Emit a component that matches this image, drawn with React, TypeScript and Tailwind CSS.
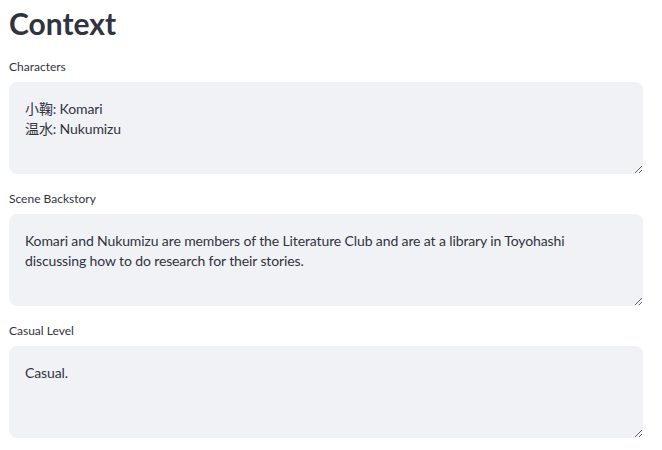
import React from "react";

const fields = [
  { label: "Characters", value: "小鞠: Komari\n温水: Nukumizu" },
  {
    label: "Scene Backstory",
    value:
      "Komari and Nukumizu are members of the Literature Club and are at a library in Toyohashi discussing how to do research for their stories.",
  },
  { label: "Casual Level", value: "Casual." },
];

const font = { fontFamily: '"Source Sans Pro", Lato, "Noto Sans CJK JP", sans-serif' };

export default function App() {
  return (
    <div className="h-[450px] w-[662px] bg-white pl-[9px] pr-[19px] text-[#31333f]" style={font}>
      <h1 className="pt-[2px] text-[30px] font-bold leading-[42px]">Context</h1>
      <div className="mt-[13px] flex flex-col gap-[15px]">
        {fields.map((f) => (
          <div key={f.label} className="flex flex-col">
            <label className="h-[25px] text-[12px] leading-[20px]">{f.label}</label>
            <textarea
              defaultValue={f.value}
              className="h-[92px] w-full resize-y rounded-[8px] bg-[#f0f2f6] py-[17px] pl-[16px] pr-[20px] text-[14px] leading-[20px] tracking-[-0.12px] text-[#31333f] outline-none"
              style={font}
            />
          </div>
        ))}
      </div>
    </div>
  );
}
